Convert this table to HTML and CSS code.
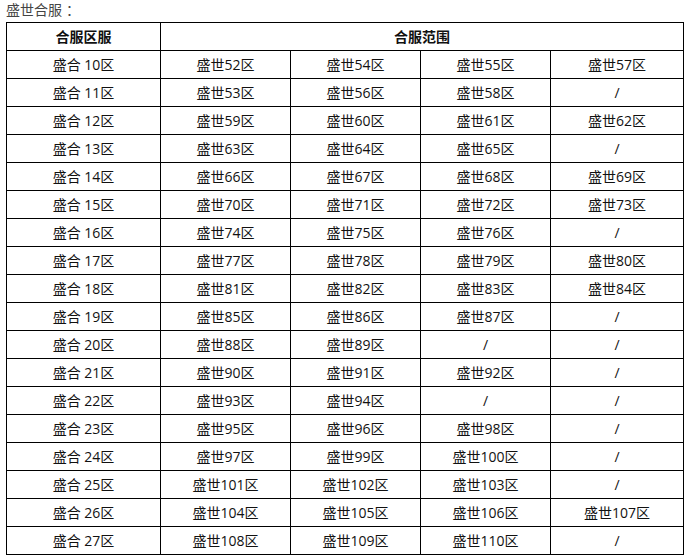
FILE: index.html
```html
<!DOCTYPE html>
<html lang="zh-CN">
<head>
<meta charset="utf-8">
<title>盛世合服</title>
<link rel="stylesheet" href="styles.css">
</head>
<body>
<p class="title">盛世合服<span class="colon">：</span></p>
<table class="merge">
<colgroup><col class="c1"><col class="cn"><col class="cn"><col class="cn"><col class="cl"></colgroup>
<thead>
<tr><th>合服区服</th><th colspan="4">合服范围</th></tr>
</thead>
<tbody>
<tr><td>盛合 10区</td><td>盛世52区</td><td>盛世54区</td><td>盛世55区</td><td>盛世57区</td></tr>
<tr><td>盛合 11区</td><td>盛世53区</td><td>盛世56区</td><td>盛世58区</td><td>/</td></tr>
<tr><td>盛合 12区</td><td>盛世59区</td><td>盛世60区</td><td>盛世61区</td><td>盛世62区</td></tr>
<tr><td>盛合 13区</td><td>盛世63区</td><td>盛世64区</td><td>盛世65区</td><td>/</td></tr>
<tr><td>盛合 14区</td><td>盛世66区</td><td>盛世67区</td><td>盛世68区</td><td>盛世69区</td></tr>
<tr><td>盛合 15区</td><td>盛世70区</td><td>盛世71区</td><td>盛世72区</td><td>盛世73区</td></tr>
<tr><td>盛合 16区</td><td>盛世74区</td><td>盛世75区</td><td>盛世76区</td><td>/</td></tr>
<tr><td>盛合 17区</td><td>盛世77区</td><td>盛世78区</td><td>盛世79区</td><td>盛世80区</td></tr>
<tr><td>盛合 18区</td><td>盛世81区</td><td>盛世82区</td><td>盛世83区</td><td>盛世84区</td></tr>
<tr><td>盛合 19区</td><td>盛世85区</td><td>盛世86区</td><td>盛世87区</td><td>/</td></tr>
<tr><td>盛合 20区</td><td>盛世88区</td><td>盛世89区</td><td>/</td><td>/</td></tr>
<tr><td>盛合 21区</td><td>盛世90区</td><td>盛世91区</td><td>盛世92区</td><td>/</td></tr>
<tr><td>盛合 22区</td><td>盛世93区</td><td>盛世94区</td><td>/</td><td>/</td></tr>
<tr><td>盛合 23区</td><td>盛世95区</td><td>盛世96区</td><td>盛世98区</td><td>/</td></tr>
<tr><td>盛合 24区</td><td>盛世97区</td><td>盛世99区</td><td>盛世100区</td><td>/</td></tr>
<tr><td>盛合 25区</td><td>盛世101区</td><td>盛世102区</td><td>盛世103区</td><td>/</td></tr>
<tr><td>盛合 26区</td><td>盛世104区</td><td>盛世105区</td><td>盛世106区</td><td>盛世107区</td></tr>
<tr><td>盛合 27区</td><td>盛世108区</td><td>盛世109区</td><td>盛世110区</td><td>/</td></tr>
</tbody>
</table>
</body>
</html>
```
FILE: styles.css
```css
html, body {
  margin: 0;
  padding: 0;
  background: #fff;
}
body {
  font-family: "Open Sans", "Noto Sans CJK SC", sans-serif;
  font-size: 14px;
  color: #222;
  padding: 0 6px;
}
.title {
  margin: 0;
  height: 22px;
  line-height: 20px;
  color: #444;
}
.colon {
  margin-left: 4px;
}
.merge {
  border-collapse: collapse;
  table-layout: fixed;
  width: 677px;
}
.c1 { width: 154px; }
.cn { width: 130px; }
.cl { width: 133px; }
.merge th,
.merge td {
  border: 1px solid #000;
  height: 27px;
  padding: 0;
  text-align: center;
  vertical-align: middle;
  line-height: 20px;
  color: #111;
  white-space: nowrap;
}
.merge th {
  font-weight: bold;
}
```
